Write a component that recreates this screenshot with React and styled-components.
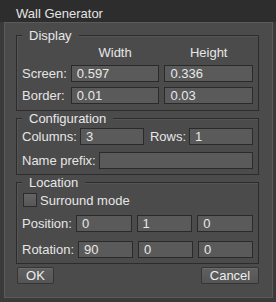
import React, { useState } from 'react';
import styled, { createGlobalStyle } from 'styled-components';

const GlobalStyle = createGlobalStyle`
	body {
		margin: 0;
		background: #383838;
		font-family: 'Liberation Sans', Arial, sans-serif;
		font-size: 13px;
	}
`;

const App = () => {
	const [surround, setSurround] = useState(false);

	return (
		<Window>
			<GlobalStyle />
			<TitleBar>Wall Generator</TitleBar>
			<Body>
				<Group>
					<Legend>Display</Legend>
					<DisplayGrid>
						<span />
						<ColHead>Width</ColHead>
						<ColHead>Height</ColHead>
						<Label>Screen:</Label>
						<Field defaultValue="0.597" />
						<Field defaultValue="0.336" />
						<Label>Border:</Label>
						<Field defaultValue="0.01" />
						<Field defaultValue="0.03" />
					</DisplayGrid>
				</Group>

				<Group $bottom={5}>
					<Legend>Configuration</Legend>
					<Rows $gap={7}>
						<Row>
							<Label>Columns:</Label>
							<Field defaultValue="3" />
							<Label $spaced>Rows:</Label>
							<Field defaultValue="1" />
						</Row>
						<Row>
							<Label>Name prefix:</Label>
							<Field defaultValue="" />
						</Row>
					</Rows>
				</Group>

				<Group $bottom={5}>
					<Legend>Location</Legend>
					<CheckRow>
						<Check
							type="checkbox"
							checked={surround}
							onChange={(e) => setSurround(e.target.checked)}
						/>
						<span>Surround mode</span>
					</CheckRow>
					<Row $gap={5} $top={8}>
						<Label>Position:</Label>
						<Field defaultValue="0" />
						<Field defaultValue="1" />
						<Field defaultValue="0" />
					</Row>
					<Row $gap={5} $top={9}>
						<Label>Rotation:</Label>
						<Field defaultValue="90" />
						<Field defaultValue="0" />
						<Field defaultValue="0" />
					</Row>
				</Group>

				<ButtonBar>
					<Button $w={37}>OK</Button>
					<Button $w={58}>Cancel</Button>
				</ButtonBar>
			</Body>
		</Window>
	);
};

export default App;

const Window = styled.div`
	width: 276px;
	height: 302px;
	box-sizing: border-box;
	display: flex;
	flex-direction: column;
	background: #3a3a3a;
	color: #e6e6e6;
`;

const TitleBar = styled.div`
	height: 22px;
	box-sizing: border-box;
	padding: 6px 0 0 16px;
	line-height: 15px;
	background: #2d2d2d;
	color: #e4e4e4;
`;

const Body = styled.div`
	flex: 1;
	margin: 0 3px 4px 4px;
	padding: 5px 13px 0 11px;
	border: 1px solid #5a5a5a;
	background: #4b4b4b;
	display: flex;
	flex-direction: column;
`;

const Group = styled.fieldset`
	margin: 0;
	min-width: 0;
	padding: 2px 5px ${(p) => p.$bottom ?? 6}px;
	border: 1px solid #2c2c2c;
	box-shadow: inset 1px 1px 0 #555;
`;

const Legend = styled.legend`
	padding: 0 7px;
	line-height: 15px;
	background: #4b4b4b;
	color: #e8e8e8;
`;

const DisplayGrid = styled.div`
	display: grid;
	grid-template-columns: auto 1fr 1fr;
	column-gap: 5px;
	row-gap: 5px;
	align-items: center;
`;

const ColHead = styled.div`
	text-align: center;
	line-height: 15px;
`;

const Label = styled.span`
	white-space: nowrap;
	line-height: 15px;
	margin-left: ${(p) => (p.$spaced ? '2px' : '0')};
	margin-right: -1px;
`;

const Rows = styled.div`
	display: flex;
	flex-direction: column;
	gap: ${(p) => p.$gap}px;
`;

const Row = styled.div`
	display: flex;
	align-items: center;
	gap: ${(p) => p.$gap ?? 4}px;
	margin-top: ${(p) => p.$top ?? 0}px;
`;

const Field = styled.input`
	flex: 1;
	min-width: 0;
	width: 100%;
	height: 17px;
	box-sizing: border-box;
	padding: 0 5px;
	border: 1px solid #2a2a2a;
	background: #5a5a5a;
	color: #e8e8e8;
	font: 13px 'Liberation Sans', Arial, sans-serif;
	outline: none;
`;

const CheckRow = styled.label`
	display: flex;
	align-items: center;
	gap: 3px;
	height: 14px;
	margin-top: 1px;
	padding-left: 1px;
	line-height: 15px;
`;

const Check = styled.input`
	appearance: none;
	margin: 0;
	width: 14px;
	height: 14px;
	box-sizing: border-box;
	border: 1px solid #2c2c2c;
	background: linear-gradient(#646464, #575757);
	&:checked {
		background: #5a5a5a;
		box-shadow: inset 0 0 0 3px #5a5a5a, inset 0 0 0 7px #ddd;
	}
`;

const ButtonBar = styled.div`
	display: flex;
	justify-content: space-between;
	margin-top: 3px;
	padding-left: 1px;
`;

const Button = styled.button`
	width: ${(p) => p.$w}px;
	height: 17px;
	padding: 0;
	box-sizing: border-box;
	border: 1px solid #353535;
	border-radius: 2px;
	background: linear-gradient(#606060, #555555);
	box-shadow: inset 0 1px 0 #6a6a6a;
	color: #eeeeee;
	font: 13px 'Liberation Sans', Arial, sans-serif;
	line-height: 15px;
`;
